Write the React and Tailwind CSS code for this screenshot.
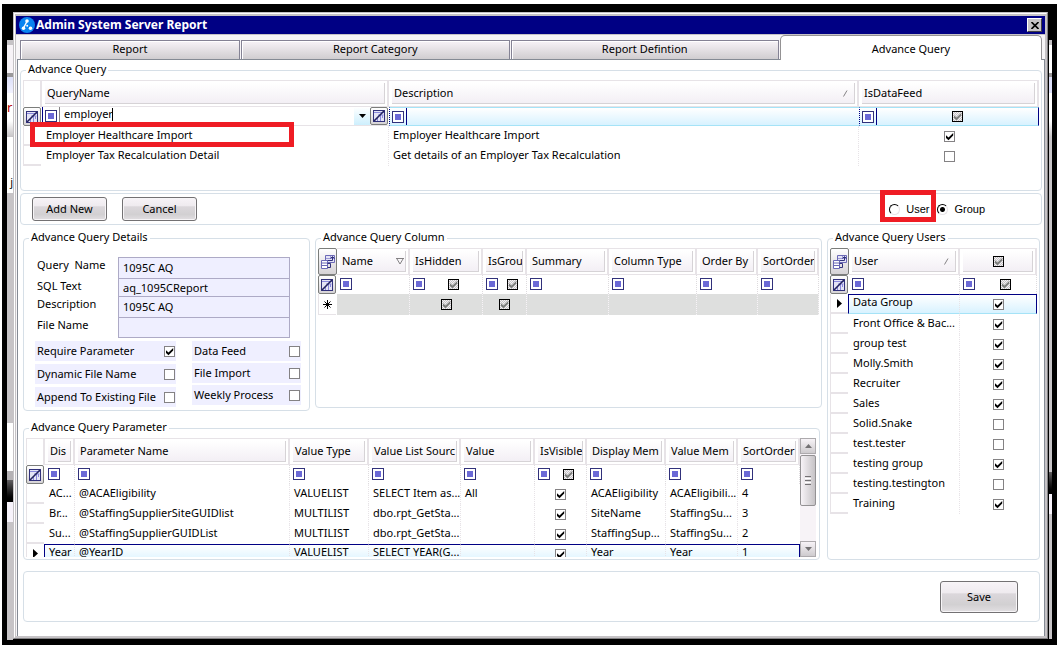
import React from 'react';
import clsx from 'clsx';

const queryRows = [
  { name: 'Employer Healthcare Import', description: 'Employer Healthcare Import', feed: true },
  { name: 'Employer Tax Recalculation Detail', description: 'Get details of an Employer Tax Recalculation', feed: false }
];

const detailFields = [
  { id: 'queryName', label: 'Query  Name', value: '1095C AQ', height: 'h-[21px]' },
  { id: 'sqlText', label: 'SQL Text', value: 'aq_1095CReport', height: 'h-[18px]' },
  { id: 'description', label: 'Description', value: '1095C AQ', height: 'h-[21px]' },
  { id: 'fileName', label: 'File Name', value: '', height: 'h-[21px]' }
];

const leftFlags = [
  { label: 'Require Parameter', checked: true },
  { label: 'Dynamic File Name', checked: false },
  { label: 'Append To Existing File', checked: false }
];

const rightFlags = [
  { label: 'Data Feed', checked: false },
  { label: 'File Import', checked: false },
  { label: 'Weekly Process', checked: false }
];

const columnHeaders = [
  { label: 'Name', sort: 'down' },
  { label: 'IsHidden', check: true },
  { label: 'IsGrou', check: true },
  { label: 'Summary' },
  { label: 'Column Type' },
  { label: 'Order By' },
  { label: 'SortOrder' }
];

const users = [
  { name: 'Data Group', checked: true },
  { name: 'Front Office & Bac...', checked: true },
  { name: 'group test', checked: true },
  { name: 'Molly.Smith', checked: true },
  { name: 'Recruiter', checked: true },
  { name: 'Sales', checked: true },
  { name: 'Solid.Snake', checked: false },
  { name: 'test.tester', checked: false },
  { name: 'testing group', checked: true },
  { name: 'testing.testington', checked: false },
  { name: 'Training', checked: true }
];

const parameterHeaders = ['Dis', 'Parameter Name', 'Value Type', 'Value List Sourc', 'Value', 'IsVisible', 'Display Mem', 'Value Mem', 'SortOrder'];

const parameterRows = [
  ['AC...', '@ACAEligibility', 'VALUELIST', 'SELECT Item as...', 'All', true, 'ACAEligibility', 'ACAEligibili...', '4'],
  ['Br...', '@StaffingSupplierSiteGUIDlist', 'MULTILIST', 'dbo.rpt_GetSta...', '', true, 'SiteName', 'StaffingSu...', '3'],
  ['Su...', '@StaffingSupplierGUIDList', 'MULTILIST', 'dbo.rpt_GetSta...', '', true, 'StaffingSup...', 'StaffingSu...', '2'],
  ['Year', '@YearID', 'VALUELIST', 'SELECT YEAR(G...', '', true, 'Year', 'Year', '1']
];

const Check = ({ checked = false, mixed = false, label, id }) => (
  <span className="inline-grid shrink-0 align-top">
    <input
      id={id}
      type="checkbox"
      aria-label={id ? undefined : label}
      defaultChecked={checked || mixed}
      className={clsx(
        'peer col-start-1 row-start-1 size-[11px] appearance-none border',
        mixed
          ? 'border-black bg-[repeating-conic-gradient(#c6c3c6_0_25%,#f4f2f4_0_50%)] bg-[length:2px_2px]'
          : 'border-[#848284] bg-white'
      )}
    />
    <svg viewBox="0 0 11 11" className={clsx('pointer-events-none invisible col-start-1 row-start-1 size-[11px] peer-checked:visible', mixed ? 'fill-[#7b7d7b]' : 'fill-black')}>
      <path d="M2 4.2v2.8l2.5 2.3L9.2 4.6V2L4.5 6.5z" />
    </svg>
  </span>
);

const Operator = () => (
  <button type="button" aria-label="Filter operator" className="grid size-3 shrink-0 place-items-center border border-[#31317b] bg-white">
    <span className="size-1.5 bg-[#6b69d6]" />
  </button>
);

const FilterIcon = () => (
  <svg viewBox="0 0 12 12" className="size-3" fill="none">
    <rect x="0.5" y="0.5" width="11" height="11" fill="#e4e4f4" stroke="#31317b" />
    <path d="M1 2.5h10" stroke="#8a88dc" />
    <path d="M5 5h5.500M7.500 5v6M9.500 5v3M4.500 8v3" stroke="#8a88dc" />
    <path d="M1 11 11 1" stroke="#22225e" strokeWidth="1.6" />
  </svg>
);

const ChooserIcon = () => (
  <svg viewBox="0 0 14 14" className="size-3.5" fill="none">
    <path d="M4.500.5h9v7h-9z" fill="#e4e4f6" stroke="#6b69b6" />
    <path d="M5 3.500h8M9.500 1v2" stroke="#9c9ad6" />
    <path d="M6 5.500h5.500V2M9.500 3.500 11.500 1.500l2 2" stroke="#31317b" />
    <path d="M.5 5.500h6v8h-6z" fill="#fff" stroke="#6b69b6" />
    <path d="M1 8h5M1 10.500h5" stroke="#6b69b6" />
    <path d="M6.500 8.500h3v4h-3" stroke="#31317b" />
  </svg>
);

const CornerButton = ({ label, className, children }) => (
  <button
    type="button"
    aria-label={label}
    className={clsx('grid place-items-center rounded-[2px] border border-[#7b7d7b] bg-linear-to-b from-white to-[#d6d3d6]', className)}
  >
    {children}
  </button>
);

const Group = ({ title, className, children }) => (
  <fieldset className={clsx('min-w-0 rounded-[4px] border border-[#d6dfe7]', className)}>
    <legend className="ml-[5px] px-[2px] pb-[2px] leading-3">{title}</legend>
    {children}
  </fieldset>
);

const HeadCell = ({ children, sort }) => (
  <th className="p-0 text-left font-normal">
    <div className="h-[27px] border-y border-r-2 border-[#e7e3e7] py-[2px] pr-[2px] pl-[3px]">
      <div className="flex h-full items-center overflow-hidden border-r border-b border-[#d6d3d6] bg-linear-to-b from-white to-[#f3eff5] pl-[2px]">
        <span className="flex-1">{children}</span>
        {sort === 'down' && (
          <svg viewBox="0 0 8 7" className="mr-px h-[7px] w-2" fill="none" stroke="#848284">
            <path d="M0 .5h8M1 1l3 5 3-5" />
          </svg>
        )}
        {sort === 'up' && (
          <svg viewBox="0 0 5 7" className="mr-1.5 h-[7px] w-[5px]" fill="none" stroke="#848284">
            <path d="M.5 6.500 4 .5" />
          </svg>
        )}
      </div>
    </div>
  </th>
);

const BlankHead = () => (
  <th className="p-0" aria-label="Row selector">
    <div className="h-[27px] border-t border-r-2 border-l border-[#e7e3e7]" />
  </th>
);

const FilterSelector = () => (
  <td className="p-0">
    <CornerButton label="Clear filters" className="h-[19px] w-[18px]">
      <FilterIcon />
    </CornerButton>
  </td>
);

const FilterCell = ({ check }) => (
  <td className="p-0">
    <div className="flex h-[19px] items-center border-r border-dotted border-[#dedbde] pb-px pl-[3px]">
      <Operator />
      {check && (
        <span className="flex flex-1 justify-center">
          <Check mixed label="Filter value" />
        </span>
      )}
    </div>
  </td>
);

const RowSelector = ({ current }) => (
  <td className="p-0">
    <div className="grid h-5 w-[18px] place-items-center border-b-2 border-l border-[#e7e3e7]">
      {current && (
        <svg viewBox="0 0 5 9" className="h-[9px] w-[5px]">
          <path d="M0 0v9l5-4.500z" />
        </svg>
      )}
    </div>
  </td>
);

const Cell = ({ children, current, first, last, center }) => (
  <td className="p-0">
    <div
      className={clsx(
        'flex h-5 items-center overflow-hidden border-t',
        center ? 'justify-center' : 'pb-1',
        !center && (first && current ? 'pl-1' : 'pl-1'),
        current ? 'border-b border-t-[#000084] border-b-[#a5e3f7] bg-linear-to-b from-white to-[#d8f2ff]' : 'border-t-transparent',
        first && current && '-ml-px border-l border-l-[#000084]',
        last && current && 'border-r border-r-[#000084]',
        !last && 'border-r border-r-[#e7e3e7] [border-right-style:dotted]'
      )}
    >
      {children}
    </div>
  </td>
);

const PushButton = ({ className, children }) => (
  <button
    type="button"
    className={clsx(
      'rounded-[3px] border border-[#737173] bg-[linear-gradient(#f7f3f7,#efebef_35%,#dbd7db_40%,#d2d0d2_75%,#e2dfe2)] shadow-[inset_0_0_0_1px_#f7f5f7]',
      className
    )}
  >
    {children}
  </button>
);

const Tab = ({ active, className, children }) => (
  <button
    type="button"
    role="tab"
    aria-selected={!!active}
    className={clsx(
      active
        ? 'h-[25px] rounded-t-[5px] border border-b-0 border-[#949294] bg-white pt-[2px]'
        : 'h-[19px] border border-b-0 border-[#848294] bg-linear-to-b from-[#f7f3f7] to-[#d0cdd0] pb-[2px] shadow-[inset_1px_1px_0_#fff]',
      className
    )}
  >
    {children}
  </button>
);

const FlagList = ({ flags, className }) => (
  <div className={clsx('flex flex-col', className)}>
    {flags.map((flag) => (
      <label key={flag.label} className="flex h-5 items-center justify-between bg-[#efefff] pr-px pl-[2px]">
        {flag.label}
        <Check id={flag.label.replace(/ /g, '')} checked={flag.checked} />
      </label>
    ))}
  </div>
);

const RadioOption = ({ label, checked, highlighted }) => (
  <label className="relative flex h-8 items-center gap-1.5 font-['Liberation_Sans',sans-serif]">
    <input
      type="radio"
      name="scope"
      defaultChecked={checked}
      className="size-[11px] appearance-none rounded-full border border-[#e7e3e7] border-t-black border-l-black bg-white checked:bg-[radial-gradient(circle,#000_2px,#fff_3px)]"
    />
    {label}
    {highlighted && <span className="pointer-events-none absolute -top-[3px] -right-[7px] bottom-[3px] -left-[9px] border-[5px] border-[#ef1c24]" />}
  </label>
);

// Slice of the window that lies behind the dialog
const LeftBackdrop = () => (
  <div aria-hidden="true" className="mt-7 -mb-px flex w-1.5 shrink-0 flex-col overflow-hidden bg-[#c6c3c6]">
    <div className="mt-[5px] h-7 bg-[#f7f3f7]" />
    <div className="h-1 bg-[#9a989a]" />
    <div className="h-4 bg-linear-to-b from-[#dcdff8] to-[#f2f2ff]" />
    <div className="h-7 bg-white text-[13px] leading-7 text-[#b50000]">r</div>
    <div className="h-4 bg-linear-to-b from-white to-[#c6c3c6]" />
    <div className="h-[57px] border-b border-[#c6c3c6] bg-white pt-9 text-right leading-[18px]">j</div>
    <div className="h-[229px]" />
    <div className="h-12 bg-white" />
    <div className="h-[9px] bg-[#b5b2b5]" />
    <div className="h-[22px] bg-linear-to-b from-[#636163] to-black" />
    <div className="h-5 bg-[#f7f3fb]" />
  </div>
);

const RightBackdrop = () => (
  <div aria-hidden="true" className="mt-7 flex w-1 shrink-0 flex-col overflow-hidden border-l border-black bg-[#c6c3c6]">
    <div className="mt-[5px] h-7 bg-white" />
    <div className="h-1 bg-[#9a989a]" />
    <div className="h-4 bg-[#dcdff8]" />
    <div className="h-7 bg-white" />
    <div className="h-4 bg-linear-to-b from-white to-[#c6c3c6]" />
    <div className="h-[335px]" />
    <div className="h-[22px] bg-linear-to-b from-[#636163] to-black" />
    <div className="h-5 bg-[#f7f3fb]" />
  </div>
);

const QueryGrid = () => (
  <Group title="Advance Query" className="h-32">
    <div className="relative pt-[3px] pr-[2px] pl-[2px]">
      <table className="w-full table-fixed whitespace-nowrap">
        <colgroup>
          <col className="w-[19px]" />
          <col className="w-[347px]" />
          <col />
          <col className="w-[180px]" />
        </colgroup>
        <thead>
          <tr>
            <BlankHead />
            <HeadCell>QueryName</HeadCell>
            <HeadCell sort="up">Description</HeadCell>
            <HeadCell>IsDataFeed</HeadCell>
          </tr>
        </thead>
        <tbody>
          <tr>
            <FilterSelector />
            <td className="p-0">
              <div className="flex h-[19px] items-center border-b border-[#e7e3e7]">
                <span className="flex h-full items-center border-r border-l border-r-[#848284] border-l-[#000084] px-[2px]">
                  <Operator />
                </span>
                <input aria-label="Query name filter" role="combobox" aria-expanded="false" defaultValue="employer" className="ml-1 h-4 w-12 pb-1 outline-none" />
                <span className="mb-1 h-[13px] w-px bg-black" />
                <span className="flex-1" />
                <button type="button" aria-label="Open list" className="grid h-full w-4 place-items-center bg-linear-to-b from-white to-[#cdeffd]">
                  <svg viewBox="0 0 7 4" className="h-1 w-[7px]">
                    <path d="M0 0h7L3.500 4z" />
                  </svg>
                </button>
                <CornerButton label="Clear query name filter" className="mr-px h-[18px] w-[18px]">
                  <FilterIcon />
                </CornerButton>
              </div>
            </td>
            <td className="p-0">
              <div className="flex h-[19px] items-center border-y border-l border-y-[#a5e3f7] border-l-[#000084] bg-linear-to-b from-white to-[#d8f2ff] [border-left-style:dotted]">
                <span className="flex h-full items-center border-r border-[#000084] px-[2px]">
                  <Operator />
                </span>
              </div>
            </td>
            <td className="p-0">
              <div className="flex h-[19px] items-center border border-x-[#000084] border-y-[#a5e3f7] bg-linear-to-b from-white to-[#d8f2ff] [border-left-style:dotted]">
                <span className="flex h-full items-center border-r border-[#000084] px-[2px]">
                  <Operator />
                </span>
                <span className="flex flex-1 justify-center">
                  <Check mixed label="Data feed filter" />
                </span>
              </div>
            </td>
          </tr>
          {queryRows.map((row) => (
            <tr key={row.name}>
              <RowSelector />
              <Cell first>{row.name}</Cell>
              <Cell>{row.description}</Cell>
              <Cell center last>
                <Check checked={row.feed} label={`${row.name} is data feed`} />
              </Cell>
            </tr>
          ))}
        </tbody>
      </table>
      <span className="pointer-events-none absolute top-[45px] left-[9px] h-[25px] w-[264px] border-[5px] border-[#ef1c24]" />
    </div>
  </Group>
);

const QueryDetails = () => (
  <Group title="Advance Query Details" className="h-[180px] w-[287px] shrink-0">
    <div className="flex flex-col pt-3 pr-[19px] pl-[13px]">
      {detailFields.map((field, index) => (
        <div key={field.id} className={clsx('flex', field.height)}>
          <label htmlFor={field.id} className="w-[81px] shrink-0 leading-4 whitespace-pre">
            {field.label}
          </label>
          <input
            id={field.id}
            defaultValue={field.value}
            className={clsx('w-full min-w-0 border border-[#adaac6] bg-[#efefff] pl-1', index < 3 && 'border-b-0')}
          />
        </div>
      ))}
    </div>
    <div className="mt-[3px] flex justify-between pr-2 pl-[11px]">
      <FlagList flags={leftFlags} className="w-[141px] gap-[3px]" />
      <FlagList flags={rightFlags} className="w-[109px] gap-[2px]" />
    </div>
  </Group>
);

const ColumnGrid = () => (
  <Group title="Advance Query Column" className="h-[177px] flex-1">
    <div className="pt-[3px] pr-[2px] pl-[2px]">
      <table className="w-full table-fixed whitespace-nowrap">
        <colgroup>
          <col className="w-[19px]" />
          <col />
          <col className="w-[73px]" />
          <col className="w-11" />
          <col className="w-[82px]" />
          <col className="w-[88px]" />
          <col className="w-[61px]" />
          <col className="w-[61px]" />
        </colgroup>
        <thead>
          <tr>
            <th className="p-0">
              <CornerButton label="Column chooser" className="h-[27px] w-[19px]">
                <ChooserIcon />
              </CornerButton>
            </th>
            {columnHeaders.map((column) => (
              <HeadCell key={column.label} sort={column.sort}>{column.label}</HeadCell>
            ))}
          </tr>
        </thead>
        <tbody>
          <tr>
            <FilterSelector />
            {columnHeaders.map((column) => (
              <FilterCell key={column.label} check={column.check} />
            ))}
          </tr>
          <tr>
            <td className="p-0">
              <div className="grid h-[21px] w-[18px] place-items-center border-b border-l border-[#e7e3e7]">
                <svg viewBox="0 0 9 9" className="size-[9px]" stroke="#000">
                  <path d="M4.500 0v9M0 4.500h9M1.500 1.500l6 6M7.500 1.500l-6 6" />
                </svg>
              </div>
            </td>
            {columnHeaders.map((column) => (
              <td key={column.label} className="p-0">
                <div className="flex h-[21px] items-center justify-center border-r border-dotted border-[#f7f3f7] bg-[#dedfde]">
                  {column.check && <Check mixed label={`New row ${column.label}`} />}
                </div>
              </td>
            ))}
          </tr>
        </tbody>
      </table>
    </div>
  </Group>
);

const ScrollBar = () => (
  <div className="flex w-4 shrink-0 flex-col bg-[#f7f3f7]">
    <button type="button" aria-label="Scroll up" className="grid h-4 place-items-center border border-[#adaaad] bg-linear-to-b from-[#f7f3f7] to-[#cecbce]">
      <svg viewBox="0 0 7 4" className="h-1 w-[7px] fill-[#737173]">
        <path d="M0 4h7L3.500 0z" />
      </svg>
    </button>
    <div className="mt-px flex h-[51px] flex-col items-center justify-center gap-px rounded-[2px] border border-[#949294] bg-linear-to-r from-[#f7f3f7] to-[#c6c3c6]">
      <span className="h-px w-1.5 bg-[#737173]" />
      <span className="h-px w-1.5 bg-white" />
      <span className="h-px w-1.5 bg-[#737173]" />
      <span className="h-px w-1.5 bg-white" />
      <span className="h-px w-1.5 bg-[#737173]" />
    </div>
    <button type="button" aria-label="Scroll down" className="mt-auto grid h-4 place-items-center border border-[#adaaad] bg-linear-to-b from-[#f7f3f7] to-[#cecbce]">
      <svg viewBox="0 0 7 4" className="h-1 w-[7px] fill-[#737173]">
        <path d="M0 0h7L3.500 4z" />
      </svg>
    </button>
  </div>
);

const ParameterGrid = () => (
  <Group title="Advance Query Parameter" className="mr-[2px] h-[139px]">
    <div className="flex h-[122px] overflow-hidden pt-[3px] pr-[3px] pl-[2px]">
      <div className="flex-1 overflow-hidden">
        <table className="w-full table-fixed whitespace-nowrap">
          <colgroup>
            <col className="w-[19px]" />
            <col className="w-[30px]" />
            <col />
            <col className="w-[79px]" />
            <col className="w-[92px]" />
            <col className="w-[74px]" />
            <col className="w-[52px]" />
            <col className="w-[79px]" />
            <col className="w-[72px]" />
            <col className="w-[62px]" />
          </colgroup>
          <thead>
            <tr>
              <BlankHead />
              {parameterHeaders.map((header) => (
                <HeadCell key={header}>{header}</HeadCell>
              ))}
            </tr>
          </thead>
          <tbody>
            <tr>
              <FilterSelector />
              {parameterHeaders.map((header) => (
                <FilterCell key={header} check={header === 'IsVisible'} />
              ))}
            </tr>
            {parameterRows.map((row, rowIndex) => {
              const current = rowIndex === 3;

              return (
                <tr key={row[1]}>
                  <RowSelector current={current} />
                  {row.map((value, index) => (
                    <Cell key={index} current={current} first={index === 0} last={index === 8} center={value === true}>
                      {value === true ? <Check checked label={`${row[1]} visible`} /> : value}
                    </Cell>
                  ))}
                </tr>
              );
            })}
          </tbody>
        </table>
      </div>
      <ScrollBar />
    </div>
  </Group>
);

const UserGrid = () => (
  <Group title="Advance Query Users" className="w-[213px] shrink-0">
    <div className="pt-[3px] pr-[2px] pl-[2px]">
      <table className="w-full table-fixed whitespace-nowrap">
        <colgroup>
          <col className="w-[19px]" />
          <col />
          <col className="w-[77px]" />
        </colgroup>
        <thead>
          <tr>
            <th className="p-0">
              <CornerButton label="Column chooser" className="h-[27px] w-[19px]">
                <ChooserIcon />
              </CornerButton>
            </th>
            <HeadCell sort="up">User</HeadCell>
            <HeadCell>
              <span className="flex justify-center">
                <Check mixed label="Select all users" />
              </span>
            </HeadCell>
          </tr>
        </thead>
        <tbody>
          <tr>
            <FilterSelector />
            <FilterCell />
            <FilterCell check />
          </tr>
          {users.map((user, index) => (
            <tr key={user.name}>
              <RowSelector current={index === 0} />
              <Cell first current={index === 0}>{user.name}</Cell>
              <Cell last center current={index === 0}>
                <Check checked={user.checked} label={user.name} />
              </Cell>
            </tr>
          ))}
        </tbody>
      </table>
    </div>
  </Group>
);

const App = () => (
  <div className="flex min-h-screen bg-white pt-1 pr-1.5 pb-1 pl-[2px] font-['Noto_Sans','Open_Sans',sans-serif] text-[11px] leading-4 text-black">
    <div className="flex flex-1 bg-black px-[5px] pt-2 pb-1.5">
      <LeftBackdrop />

      <main className="flex min-w-0 flex-1 flex-col border border-[#c6c3c6] border-r-[#848284] border-b-[#848284]">
        <div className="flex flex-1 flex-col border border-white border-r-[#c6c3c6] border-b-[#c6c3c6]">
          <div className="flex flex-1 flex-col border border-[#c6c3c6] bg-[#f7f5f7]">
            {/* Title bar */}
            <header className="flex h-5 items-center border-y border-[#c6c3c6] bg-[#000084] pr-[3px] pl-[3px]">
              <svg viewBox="0 0 16 16" className="mr-px size-4">
                <circle cx="8" cy="8" r="8" fill="#0a84f0" />
                <path d="M8 4.500 4.500 11" stroke="#fff" strokeWidth="1.500" />
                <circle cx="8" cy="4" r="1.800" fill="#fff" />
                <circle cx="4.500" cy="11.200" r="1.800" fill="#fff" />
                <circle cx="11.500" cy="11.200" r="1.800" fill="#fff" />
                <circle cx="8.200" cy="8.800" r="1" fill="#fff" />
              </svg>
              <h1 className="flex-1 text-[12px] font-bold text-white">Admin System Server Report</h1>
              <button type="button" aria-label="Close" className="grid h-3.5 w-[15px] place-items-center border border-white border-r-[#424142] border-b-[#424142] bg-[#c6c3c6]">
                <svg viewBox="0 0 8 7" className="h-[7px] w-2" stroke="#000" strokeWidth="1.600">
                  <path d="M.5 0l7 7M7.500 0l-7 7" />
                </svg>
              </button>
            </header>

            {/* Tabs */}
            <div role="tablist" className="flex items-end gap-px pr-[3px] pl-1">
              <Tab className="w-[220px]">Report</Tab>
              <Tab className="flex-1">Report Category</Tab>
              <Tab className="flex-1">Report Defintion</Tab>
              <Tab active className="relative -mb-px w-[262px]">Advance Query</Tab>
            </div>

            <form className="ml-px flex flex-1 flex-col border-t border-r border-l border-[#848a94] bg-white px-[2px] pt-[3px]">
              <QueryGrid />

              <div className="mt-[2px] flex h-8 items-center rounded-[4px] border border-[#d6dfe7] pr-14 pl-[11px]">
                <PushButton className="h-6 w-[75px]">Add New</PushButton>
                <PushButton className="ml-[15px] h-6 w-[75px]">Cancel</PushButton>
                <div className="ml-auto flex gap-2">
                  <RadioOption label="User" highlighted />
                  <RadioOption label="Group" checked />
                </div>
              </div>

              <div className="mt-1.5 flex gap-[5px] pr-[2px] pl-[3px]">
                <div className="flex min-w-0 flex-1 flex-col gap-2.5">
                  <div className="flex items-start gap-[5px]">
                    <QueryDetails />
                    <ColumnGrid />
                  </div>
                  <ParameterGrid />
                </div>
                <UserGrid />
              </div>

              <div className="mt-[11px] mr-[2px] mb-3.5 ml-[3px] flex h-[51px] items-center justify-end rounded-[4px] border border-[#d6dfe7] pr-[21px]">
                <PushButton className="h-8 w-[78px]">Save</PushButton>
              </div>
            </form>
          </div>
        </div>
      </main>

      <RightBackdrop />
    </div>
  </div>
);

export default App;
